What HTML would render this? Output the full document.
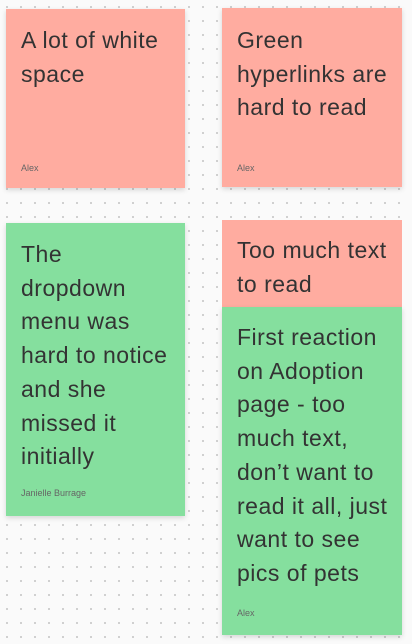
<!DOCTYPE html>
<html><head><style>
html,body{margin:0;padding:0;width:412px;height:644px;overflow:hidden;
background:#fafafa radial-gradient(circle,#c8c8c8 0.8px,transparent 1.2px) 0 0/14px 14px;
font-family:"Liberation Sans",sans-serif;color:#333;}
.c{position:absolute;box-shadow:0 2px 5px rgba(0,0,0,0.15);box-sizing:border-box;padding-left:15px}
.r{background:#ffaca0}.g{background:#85df9e}
.t{font-size:23px;line-height:33.7px;letter-spacing:0.5px;white-space:nowrap}
.a{position:absolute;left:15px;font-size:9px;color:#666}
</style></head><body>
<div class="c r" style="left:6px;top:9px;width:179px;height:179px">
<div class="t" style="margin-top:15px">A lot of white<br>space</div><div class="a" style="top:154px">Alex</div></div>
<div class="c r" style="left:222px;top:8px;width:180px;height:179px">
<div class="t" style="margin-top:16px">Green<br>hyperlinks are<br>hard to read</div><div class="a" style="top:155px">Alex</div></div>
<div class="c g" style="left:6px;top:223px;width:179px;height:293px">
<div class="t" style="margin-top:15px">The<br>dropdown<br>menu was<br>hard to notice<br>and she<br>missed it<br>initially</div><div class="a" style="top:265px">Janielle Burrage</div></div>
<div class="c r" style="left:222px;top:220px;width:180px;height:87px;box-shadow:none">
<div class="t" style="margin-top:14px">Too much text<br>to read</div></div>
<div class="c g" style="left:222px;top:307px;width:180px;height:328px">
<div class="t" style="margin-top:14px">First reaction<br>on Adoption<br>page - too<br>much text,<br>don’t want to<br>read it all, just<br>want to see<br>pics of pets</div><div class="a" style="top:301px">Alex</div></div>
</body></html>
